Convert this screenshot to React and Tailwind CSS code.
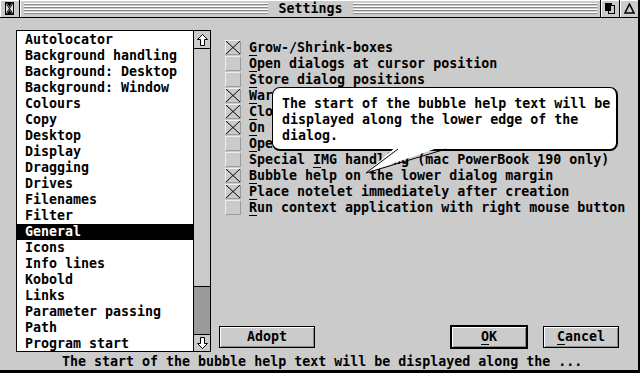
import React from 'react';

const items = [
  'Autolocator',
  'Background handling',
  'Background: Desktop',
  'Background: Window',
  'Colours',
  'Copy',
  'Desktop',
  'Display',
  'Dragging',
  'Drives',
  'Filenames',
  'Filter',
  'General',
  'Icons',
  'Info lines',
  'Kobold',
  'Links',
  'Parameter passing',
  'Path',
  'Program start',
];

const options = [
  { pre: '', key: 'G', rest: 'row-/Shrink-boxes', checked: true },
  { pre: '', key: 'O', rest: 'pen dialogs at cursor position', checked: false },
  { pre: '', key: 'S', rest: 'tore dialog positions', checked: false },
  { pre: '', key: 'W', rest: 'arn before overwriting files', checked: true },
  { pre: '', key: 'C', rest: 'lose windows with the dialog', checked: true },
  { pre: '', key: 'O', rest: 'n top windows only', checked: true },
  { pre: '', key: 'O', rest: 'pen folders in new window', checked: false },
  { pre: 'Special ', key: 'I', rest: 'MG handling (mac PowerBook 190 only)', checked: false },
  { pre: '', key: 'B', rest: 'ubble help on the lower dialog margin', checked: true },
  { pre: '', key: 'P', rest: 'lace notelet immediately after creation', checked: true },
  { pre: '', key: 'R', rest: 'un context application with right mouse button', checked: false },
];

function Grooves() {
  return (
    <div className="flex-1 flex flex-col gap-px">
      {[0, 1, 2, 3].map((i) => (
        <div key={i}>
          <div className="h-px bg-white" />
          <div className="h-px bg-[#8a8a8a]" />
        </div>
      ))}
    </div>
  );
}

// keyboard shortcut letter, underlined at the bottom of the row
function Key({ children }) {
  return <span className="inline-block h-4 border-b border-black">{children}</span>;
}

function Check({ checked }) {
  return (
    <div className="w-[16px] h-[15px] border border-t-[#eeeeee] border-l-[#eeeeee] border-b-[#9a9a9a] border-r-[#9a9a9a] bg-[#cbcbcb]">
      {checked && (
        <svg width="14" height="13" viewBox="0 0 14 13" className="block">
          <path d="M0 0L14 13M14 0L0 13" stroke="black" strokeWidth="1" />
        </svg>
      )}
    </div>
  );
}

function Arrow({ down }) {
  return (
    <svg width="11" height="12" viewBox="0 0 11 12" className={down ? 'rotate-180' : ''}>
      <path d="M5.5 0.5L10.5 5.5H7.5V11.5H3.5V5.5H0.5Z" fill="white" stroke="black" strokeWidth="1" />
    </svg>
  );
}

export default function App() {
  return (
    <div className="w-[640px] h-[373px] bg-[#cbcbcb] border-r-2 border-black flex flex-col overflow-hidden font-['DejaVu_Sans_Mono',monospace] font-bold text-[13.3px] leading-4 text-black relative">
      {/* title bar */}
      <div className="h-[18px] border-b border-black flex">
        <div className="w-[20px] border-r border-black flex items-center justify-center shadow-[inset_1px_1px_0_white]">
          <svg width="9" height="13" viewBox="0 0 9 13">
            <rect x="0.5" y="0.5" width="8" height="12" fill="#dddddd" stroke="black" />
            <path d="M1 1L8 12M8 1L1 12" stroke="black" />
            <path d="M2 1H7L4.5 5Z M2 12H7L4.5 8Z" fill="black" />
          </svg>
        </div>
        <div className="flex-1 flex items-center pl-[4px] pr-[3px] shadow-[inset_1px_1px_0_white]">
          <Grooves />
          <span className="px-[10px]">Settings</span>
          <Grooves />
        </div>
        <div className="w-[19px] border-l border-black flex items-center justify-center shadow-[inset_1px_1px_0_white]">
          <svg width="12" height="13" viewBox="0 0 12 13">
            <rect x="1" y="1" width="7" height="8" fill="black" />
            <rect x="4.5" y="3.5" width="6" height="8" fill="#cbcbcb" stroke="black" />
            <rect x="4" y="3" width="3" height="6" fill="black" />
          </svg>
        </div>
        <div className="w-[19px] border-l border-black flex items-center justify-center shadow-[inset_1px_1px_0_white]">
          <svg width="11" height="11" viewBox="0 0 11 11">
            <path d="M5.5 1L10 10H1Z" fill="none" stroke="black" strokeWidth="1.6" />
          </svg>
        </div>
      </div>

      {/* body */}
      <div className="flex pt-[12px] pl-[16px]">
        <div className="w-[195px] h-[322px] border border-black flex bg-white">
          <div className="flex-1 overflow-hidden pt-px">
            {items.map((it) => (
              <div
                key={it}
                className={
                  'h-4 pl-2 whitespace-pre ' + (it === 'General' ? 'bg-black text-white' : '')
                }
              >
                {it}
              </div>
            ))}
          </div>
          <div className="w-[17px] border-l border-black bg-[#cbcbcb] flex flex-col">
            <div className="h-[18px] border-b border-black flex items-center justify-center">
              <Arrow />
            </div>
            <div className="flex-1 flex flex-col justify-end">
              <div className="h-[48px] bg-[#9b9b9b] border-t border-black" />
            </div>
            <div className="h-[17px] border-t border-black flex items-center justify-center">
              <Arrow down />
            </div>
          </div>
        </div>

        <div className="flex-1 flex flex-col justify-between">
          <div className="mt-[10px] pl-[14px]">
            {options.map((o, i) => (
              <div key={i} className="h-4 flex items-start gap-[8px]">
                <Check checked={o.checked} />
                <span className="whitespace-pre">
                  {o.pre}
                  <Key>{o.key}</Key>
                  {o.rest}
                </span>
              </div>
            ))}
          </div>
          <div className="h-[24px] mb-[3px] flex items-center justify-between pl-[8px] pr-[19px]">
            <div className="w-[96px] h-[22px] border border-black flex items-center justify-center shadow-[inset_1px_1px_0_white,inset_-1px_-1px_0_#8a8a8a]">
              Adopt
            </div>
            <div className="flex items-center gap-[15px]">
              <div className="w-[78px] h-[24px] border-2 border-black flex items-center justify-center shadow-[inset_1px_1px_0_white,inset_-1px_-1px_0_#8a8a8a]">
                <span>
                  <Key>O</Key>K
                </span>
              </div>
              <div className="w-[76px] h-[22px] border border-black flex items-center justify-center shadow-[inset_1px_1px_0_white,inset_-1px_-1px_0_#8a8a8a]">
                <span>
                  <Key>C</Key>ancel
                </span>
              </div>
            </div>
          </div>
        </div>
      </div>

      {/* status line */}
      <div className="h-[21px] pt-[2px] pl-[62px] border-b-[3px] border-black whitespace-pre">
        The start of the bubble help text will be displayed along the ...
      </div>

      {/* bubble help */}
      <div className="absolute left-[272px] top-[87px] w-[346px] h-[64px] bg-white border border-black border-r-2 border-b-2 rounded-[8px] pl-[9px] pt-[8px] whitespace-pre">
        <div>The start of the bubble help text will be</div>
        <div>displayed along the lower edge of the</div>
        <div>dialog.</div>
      </div>
      <svg className="absolute left-[360px] top-[145px]" width="90" height="32" viewBox="0 0 90 32">
        <path d="M38 0H86L6 28Z" fill="white" />
        <path d="M38 4L6 28L86 4" fill="none" stroke="black" strokeWidth="1" />
      </svg>
    </div>
  );
}
